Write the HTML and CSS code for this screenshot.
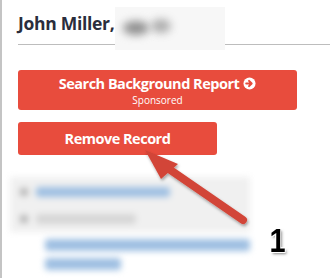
FILE: index.html
```html
<!DOCTYPE html>
<html>
<head>
<meta charset="utf-8">
<link rel="stylesheet" href="styles.css">
</head>
<body>
<div class="page">
  <div class="head">
    <h1 class="name">John Miller,</h1>
    <div class="redact"><span class="blob b1"></span><span class="blob b2"></span></div>
  </div>
  <div class="actions">
    <a class="btn btn-wide">
      <span class="btn-main">Search Background Report <span class="circ"><svg width="13" height="13" viewBox="0 0 14 14"><circle cx="7" cy="7" r="6.5" fill="#fff"/><path d="M3.5 7h5M6.5 4.2L9.3 7 6.5 9.8" stroke="#e74c3c" stroke-width="2.2" fill="none" stroke-linecap="round" stroke-linejoin="round"/></svg></span></span>
      <span class="btn-sub">Sponsored</span>
    </a>
    <a class="btn btn-short"><span class="btn-main">Remove Record</span></a>
  </div>
  <div class="blurred">
    <div class="panel">
      <div class="row"><span class="dot"></span><span class="line blue w1"></span></div>
      <div class="row"><span class="dot"></span><span class="line gray w2"></span></div>
    </div>
    <div class="sub">
      <span class="line blue w3"></span>
      <span class="line blue w4"></span>
    </div>
  </div>
  <svg class="arrow" width="330" height="278" viewBox="0 0 330 278">
    <defs>
      <filter id="sh" x="-20%" y="-20%" width="140%" height="140%">
        <feDropShadow dx="1" dy="2" stdDeviation="1.5" flood-color="#000" flood-opacity="0.35"/>
      </filter>
    </defs>
    <g filter="url(#sh)" fill="#d24537">
      <line x1="243" y1="220" x2="166" y2="167" stroke="#d24537" stroke-width="8" stroke-linecap="round"/>
      <polygon points="145,150 178,164 161,179"/>
    </g>
  </svg>
  <div class="num">1</div>
</div>
</body>
</html>
```
FILE: styles.css
```css
* { box-sizing: border-box; }
html, body { margin: 0; padding: 0; background: #fff; }
body { width: 330px; height: 278px; overflow: hidden; font-family: "Open Sans", "Liberation Sans", sans-serif; }
.page { position: relative; height: 278px; border-left: 2px solid #c4c4c4; padding-left: 16px; }
.head { display: flex; align-items: flex-start; border-bottom: 1px solid #bdbdbd; height: 45px; padding-top: 11px; }
.name { margin: 0; font-size: 17.5px; font-weight: 700; color: #2a2d3c; line-height: 24px; letter-spacing: -0.3px; }
.redact { position: relative; width: 110px; height: 43px; margin-top: -4px; margin-left: 1px; background: #f7f7f7; z-index: 1; }
.blob { position: absolute; background: #8f8f8f; border-radius: 50%; filter: blur(4px); }
.b1 { left: 8px; top: 14px; width: 26px; height: 14px; }
.b2 { left: 36px; top: 12px; width: 20px; height: 14px; opacity: 0.7; }
.actions { display: flex; flex-direction: column; gap: 12px; margin-top: 25px; }
.btn { display: flex; flex-direction: column; align-items: center; justify-content: center; background: #e84c3d; color: #fff; border-radius: 3px; text-decoration: none; }
.btn-wide { width: 279px; height: 40px; justify-content: flex-start; padding-top: 5px; }
.btn-short { width: 199px; height: 33px; }
.btn-main { font-size: 14.5px; font-weight: 700; line-height: 17px; display: flex; align-items: center; gap: 4px; letter-spacing: -0.5px; }
.circ { display: inline-flex; }
.btn-sub { font-size: 10px; line-height: 12px; margin-top: 2px; }
.blurred { margin-top: 22px; margin-left: -8px; filter: blur(3px); }
.panel { background: #f0f0f0; width: 240px; padding: 10px 0 8px 10px; display: flex; flex-direction: column; gap: 17px; }
.row { display: flex; align-items: center; gap: 8px; height: 10px; }
.dot { width: 8px; height: 8px; background: #b5b5b5; border-radius: 2px; }
.line { display: block; height: 10px; border-radius: 3px; }
.blue { background: #9ebfe2; }
.gray { background: #d6d6d6; }
.w1 { width: 134px; }
.w2 { width: 100px; }
.sub { padding: 7px 0 0 35px; display: flex; flex-direction: column; gap: 7px; }
.w3 { width: 205px; height: 12px; }
.w4 { width: 76px; height: 12px; }
.arrow { position: absolute; left: -2px; top: 0; pointer-events: none; }
.num { position: absolute; left: 266px; top: 222px; font-family: "Liberation Sans", Arial, sans-serif; font-weight: 700; font-size: 34px; line-height: 36px; color: #000; transform: scaleX(0.85); text-shadow: 0 0 2px #fff, 1px 1px 0 #fff, -1px -1px 0 #fff, 1px -1px 0 #fff, -1px 1px 0 #fff, 2px 2px 3px rgba(0,0,0,0.5); }
```
